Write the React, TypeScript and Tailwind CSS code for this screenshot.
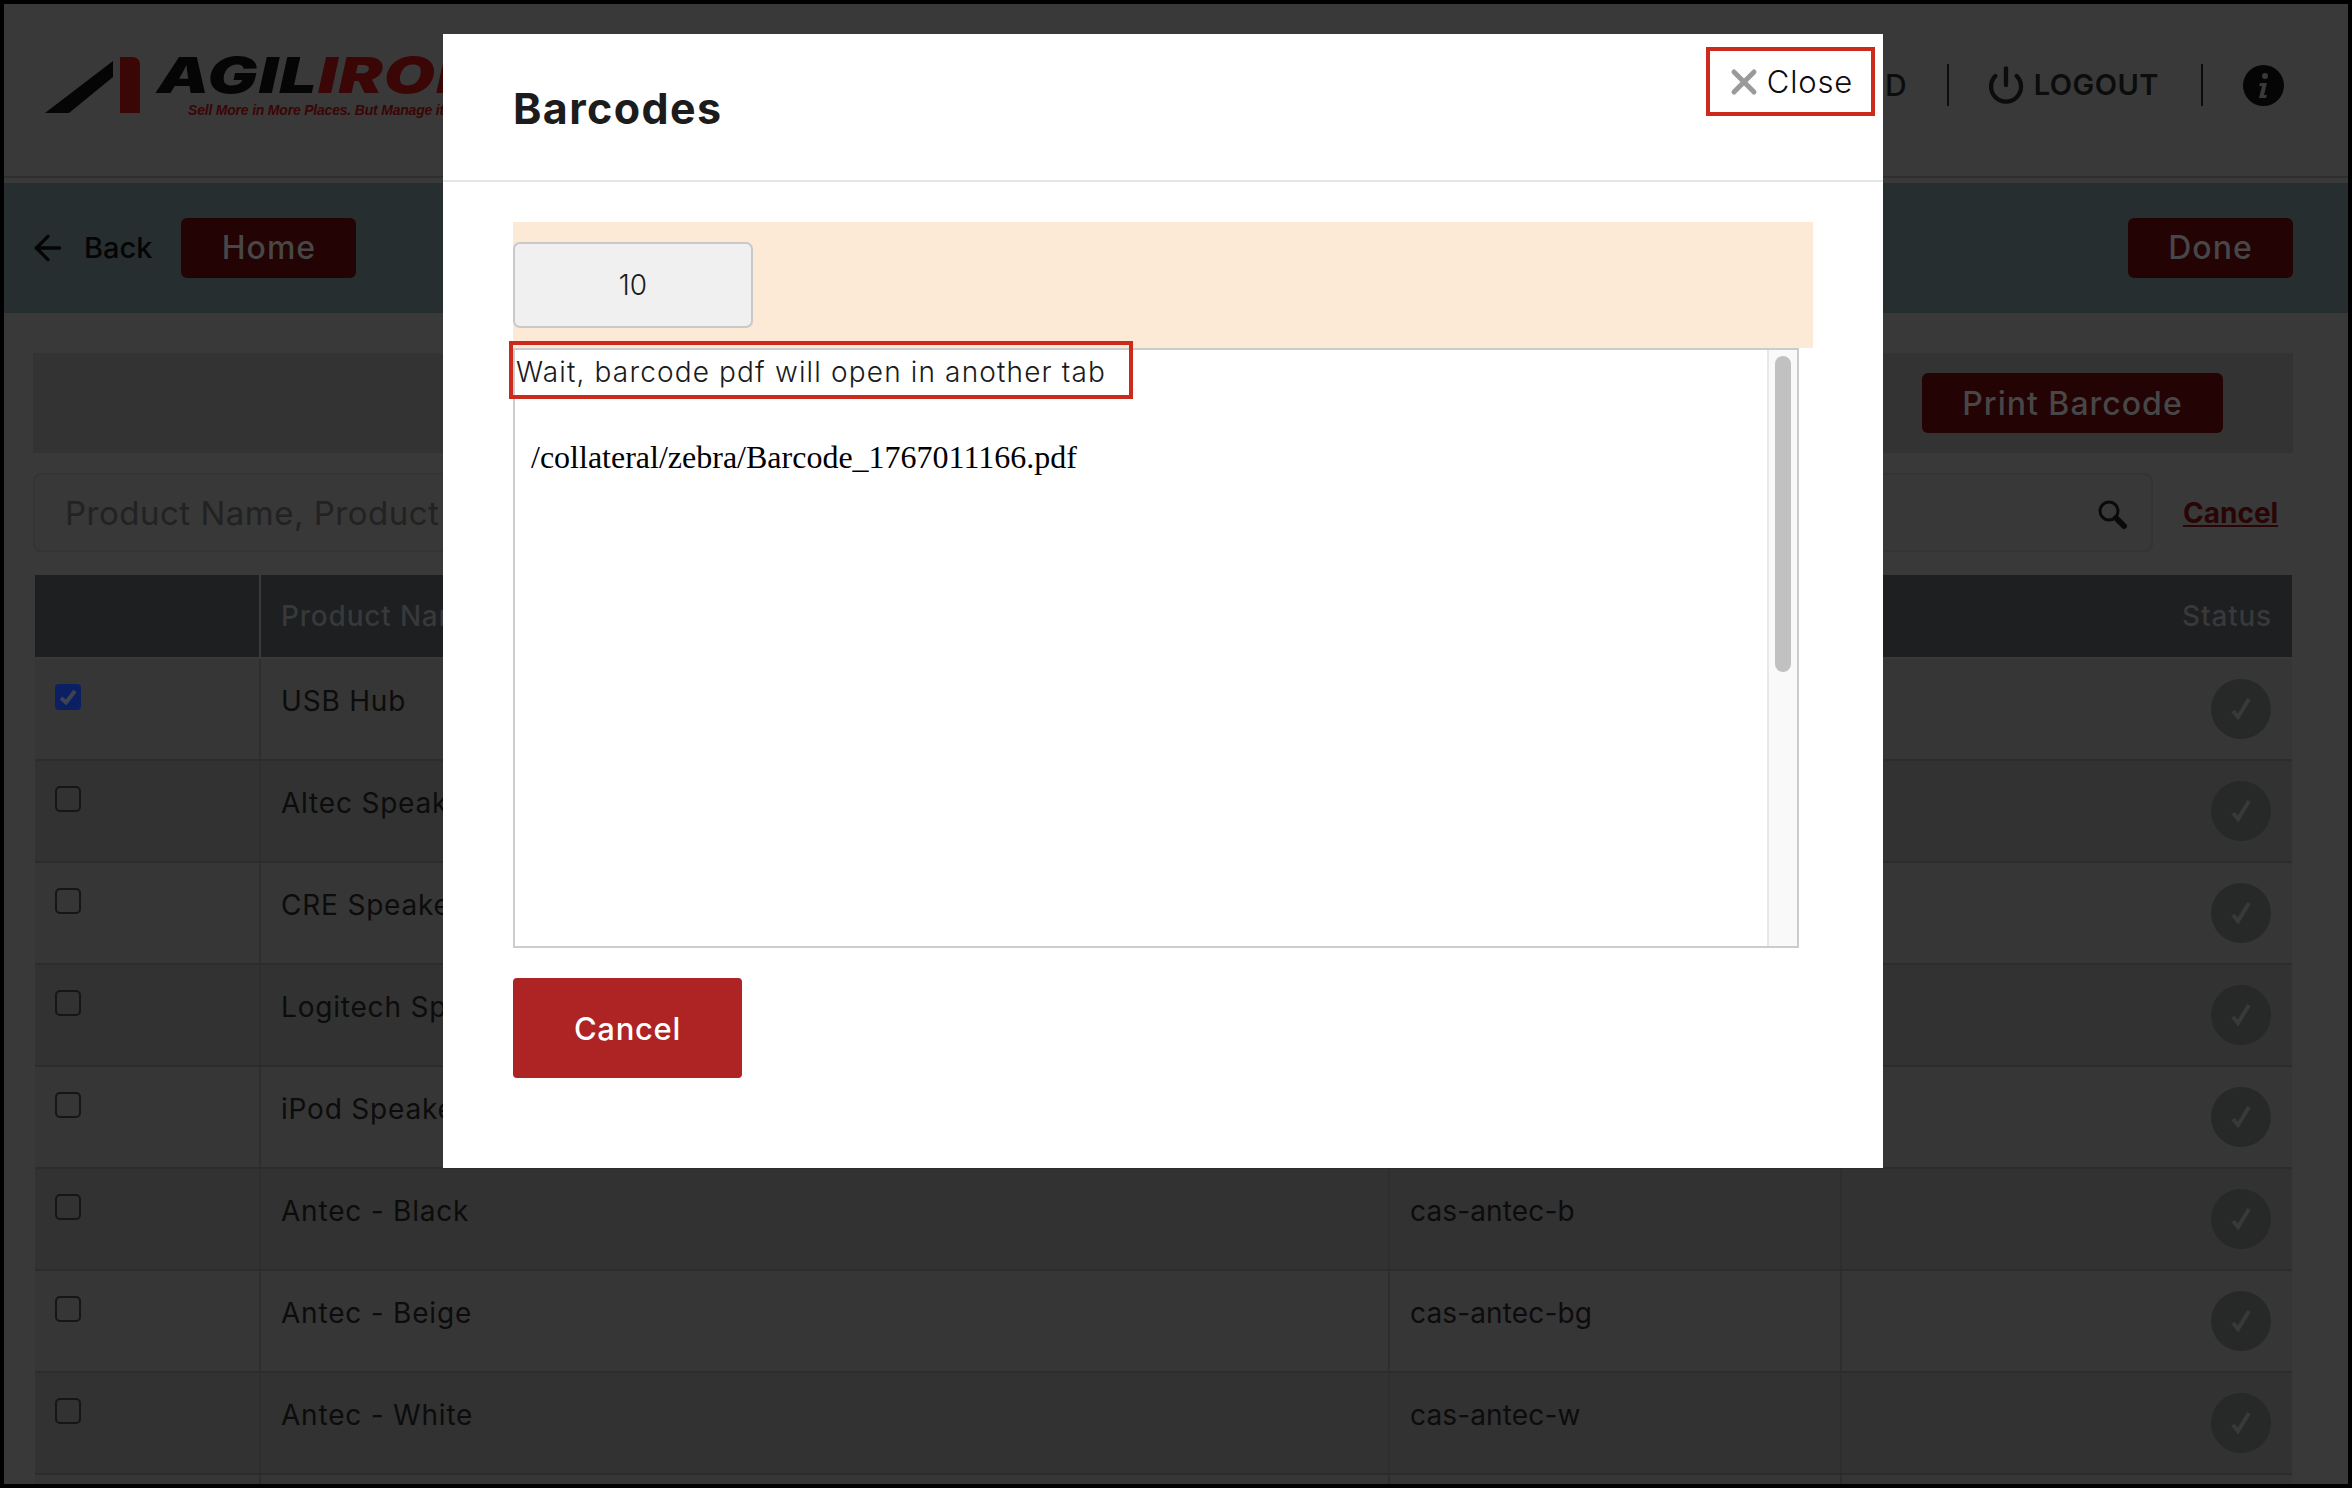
import { ArrowLeft, Power, X } from 'lucide-react'

interface ProductRow {
  name: string
  sku: string
}

const PRODUCTS: ProductRow[] = [
  { name: 'USB Hub', sku: 'cas-usb-hub' },
  { name: 'Altec Speakers', sku: 'cas-altec' },
  { name: 'CRE Speakers', sku: 'cas-cre' },
  { name: 'Logitech Speakers', sku: 'cas-logitech' },
  { name: 'iPod Speakers', sku: 'cas-ipod' },
  { name: 'Antec - Black', sku: 'cas-antec-b' },
  { name: 'Antec - Beige', sku: 'cas-antec-bg' },
  { name: 'Antec - White', sku: 'cas-antec-w' },
  { name: '', sku: '' },
]

function StatusCheck() {
  return (
    <span className="flex h-[60px] w-[60px] items-center justify-center rounded-full bg-[#272928]">
      <svg width="24" height="28" viewBox="0 0 24 28" fill="none">
        <path d="M4 16l5 6L20 4" stroke="#383a39" strokeWidth="4" />
      </svg>
    </span>
  )
}

function TableRow({ row, index }: { row: ProductRow; index: number }) {
  return (
    <div
      className={`flex h-[102px] border-b-2 border-[#2c2c2c] ${
        index % 2 === 1 ? 'bg-[#323232]' : 'bg-[#363636]'
      }`}
    >
      <div className="w-[226px] shrink-0 border-r-2 border-[#2e2e2e] pl-5 pt-[25px]">
        {index === 0 ? (
          <span className="flex h-[26px] w-[26px] items-center justify-center rounded-[4px] bg-[#0b2063]">
            <svg width="18" height="16" viewBox="0 0 18 16" fill="none">
              <path d="M2 9l5 4.5L16 2" stroke="#3f4350" strokeWidth="4" />
            </svg>
          </span>
        ) : (
          <span className="block h-[26px] w-[26px] rounded-[5px] border-2 border-[#161616]" />
        )}
      </div>
      <div className="w-[1129px] shrink-0 border-r-2 border-[#2e2e2e] pl-[20px] pt-[25px] text-[28px] leading-[34px] tracking-[0.8px] text-[#0c0c0c]">
        {row.name}
      </div>
      <div className="w-[452px] shrink-0 border-r-2 border-[#2e2e2e] pl-[20px] pt-[25px] text-[28px] leading-[34px] tracking-[0.15px] text-[#0c0c0c]">
        {row.sku}
      </div>
      <div className="flex flex-1 justify-end pr-[21px] pt-[20px]">
        <StatusCheck />
      </div>
    </div>
  )
}

function Logo() {
  return (
    <div className="flex items-start">
      <svg width="96" height="60" viewBox="0 0 96 60" fill="none" className="mt-[53px] shrink-0">
        <path d="M0 56h24l44-36V4z" fill="#050505" />
        <path d="M75 0h12c5 0 8 3 8 8v48H75z" fill="#3a0606" />
      </svg>
      <div className="ml-4 mt-[46px] whitespace-nowrap">
        <div className="origin-left scale-x-[1.32] text-[50px] font-black italic leading-[50px] tracking-[1px] text-[#050505]">
          AGIL<span className="text-[#3a0606]">IRON</span>
        </div>
        <div className="ml-[31px] text-[14px] font-bold italic leading-[20px] tracking-[-0.2px] text-[#3a0606] [font-family:'Liberation_Sans',sans-serif]">
          Sell More in More Places. But Manage it All
        </div>
      </div>
    </div>
  )
}

function SearchGlyph() {
  return (
    <svg width="30" height="30" viewBox="0 0 30 30" fill="none">
      <circle cx="12" cy="12" r="9" stroke="#0a0a0a" strokeWidth="3" />
      <path d="M19 19l8 8" stroke="#0a0a0a" strokeWidth="6" strokeLinecap="round" />
    </svg>
  )
}

function BarcodeModal() {
  return (
    <div className="absolute left-[439px] top-[30px] h-[1134px] w-[1440px] bg-white">
      <div className="flex h-[148px] items-start justify-between border-b-2 border-[#e5e5e5] px-[70px] pt-[46px]">
        <h2 className="text-[43px] font-bold leading-[56px] tracking-[1.4px] text-[#1c1c1c]">Barcodes</h2>
        <button type="button" className="-mr-[40px] -mt-[18px] flex h-[40px] items-center gap-[3px]">
          <X size={40} strokeWidth={3} className="text-[#9a9a9a]" />
          <span className="text-[31px] font-light tracking-[0.8px] text-[#0c0c0c]">Close</span>
        </button>
      </div>

      <div className="px-[70px] pt-[40px]">
        <div className="h-[126px] w-[1300px] bg-[#fce9d6] pt-5">
          <div className="flex h-[86px] w-[240px] items-center justify-center rounded-[7px] border-2 border-[#c9c9c9] bg-[#f0f0f0] text-[28px] font-light text-[#1a1a1a]">
            10
          </div>
        </div>

        <div className="flex h-[600px] w-[1286px] border-2 border-[#cccccc]">
          <div className="flex-1">
            <p className="pl-[1px] pt-[4px] text-[28px] font-light leading-[36px] tracking-[1.15px] text-[#1a1a1a]">
              Wait, barcode pdf will open in another tab
            </p>
            <p className="pl-[16px] pt-[48px] text-[32px] leading-[38px] text-black [font-family:'Liberation_Serif',serif]">
              /collateral/zebra/Barcode_1767011166.pdf
            </p>
          </div>
          <div className="w-[30px] border-l-2 border-[#e8e8e8] bg-[#f9f9f9] pl-[6px] pt-[6px]">
            <div className="h-[316px] w-4 rounded-full bg-[#c1c1c1]" />
          </div>
        </div>

        <button
          type="button"
          className="mt-[30px] h-[100px] w-[229px] rounded-[4px] bg-[#ae2323] pt-[2px] text-[31px] font-medium tracking-[0.7px] text-white"
        >
          Cancel
        </button>
      </div>

      {/* red annotations from the screenshot */}
      <div className="absolute left-[1263px] top-[13px] h-[69px] w-[169px] border-4 border-[#cb2a1c]" />
      <div className="absolute left-[66px] top-[307px] h-[58px] w-[624px] border-4 border-[#cb2a1c]" />
    </div>
  )
}

export default function App() {
  return (
    <div className="relative h-[1488px] w-[2352px] overflow-hidden border-4 border-black bg-[#393939] [font-family:Inter,sans-serif]">
      {/* header */}
      <div className="flex h-[174px] items-start justify-between border-b-2 border-[#2f2f2f] pl-[41px] pr-[64px]">
        <Logo />
        <div className="mt-[60px] flex items-center text-[#0c0c0c]">
          <span className="text-[30px] font-medium leading-[42px]">D</span>
          <span className="ml-[40px] h-[42px] w-[2px] bg-[#0c0c0c]" />
          <Power size={40} strokeWidth={2.6} className="ml-[37px]" />
          <span className="ml-[8px] text-[29px] font-semibold leading-[42px] tracking-[0.5px]">LOGOUT</span>
          <span className="ml-[42px] h-[42px] w-[2px] bg-[#0c0c0c]" />
          <svg width="41" height="41" viewBox="0 0 41 41" className="ml-[40px]">
            <circle cx="20.5" cy="20.5" r="20.5" fill="#050505" />
            <circle cx="22" cy="11" r="3" fill="#393939" />
            <path d="M17 18h7l-3 12h3l-1 3h-7l3-12h-3z" fill="#393939" />
          </svg>
        </div>
      </div>

      {/* action bar */}
      <div className="mt-[5px] flex h-[130px] items-center bg-[#272e2f] pl-[24px] pr-[55px]">
        <ArrowLeft size={40} strokeWidth={2} className="text-[#050505]" />
        <span className="ml-[16px] text-[29px] font-medium text-[#050505]">Back</span>
        <button
          type="button"
          className="ml-[29px] h-[60px] w-[175px] rounded-[6px] bg-[#230304] text-[32px] font-medium tracking-[1px] text-[#474747]"
        >
          Home
        </button>
        <button
          type="button"
          className="ml-auto h-[60px] w-[165px] rounded-[6px] bg-[#230304] text-[32px] font-medium tracking-[1px] text-[#474747]"
        >
          Done
        </button>
      </div>

      <div className="ml-[29px] mr-[55px]">
        {/* print bar */}
        <div className="mt-[40px] flex h-[100px] items-center justify-end bg-[#333333] pr-[70px]">
          <button
            type="button"
            className="h-[60px] w-[301px] rounded-[6px] bg-[#230304] pt-[2px] text-[32px] font-medium tracking-[1px] text-[#474747]"
          >
            Print Barcode
          </button>
        </div>

        {/* search */}
        <div className="mt-[20px] flex items-center">
          <div className="flex h-[79px] w-[2120px] items-center justify-between rounded-[8px] border-2 border-[#343434] bg-[#383838] pl-[30px] pr-[24px] pt-[2px]">
            <span className="text-[33px] tracking-[0.5px] text-[#222222]">Product Name, Product SKU</span>
            <SearchGlyph />
          </div>
          <a className="ml-[30px] text-[28px] font-bold text-[#2a0505] underline">Cancel</a>
        </div>

        {/* table */}
        <div className="ml-[2px] mt-[23px] w-[2257px]">
          <div className="mb-[2px] flex h-[82px] bg-[#1e1f21] text-[28px] font-medium leading-[82px] tracking-[0.8px] text-[#37393b]">
            <div className="w-[226px] shrink-0 border-r-2 border-[#3a3a3a]" />
            <div className="flex-1 pl-[20px]">Product Name</div>
            <div className="pr-5">Status</div>
          </div>
          {PRODUCTS.map((row, index) => (
            <TableRow key={index} row={row} index={index} />
          ))}
        </div>
      </div>

      <BarcodeModal />
    </div>
  )
}
